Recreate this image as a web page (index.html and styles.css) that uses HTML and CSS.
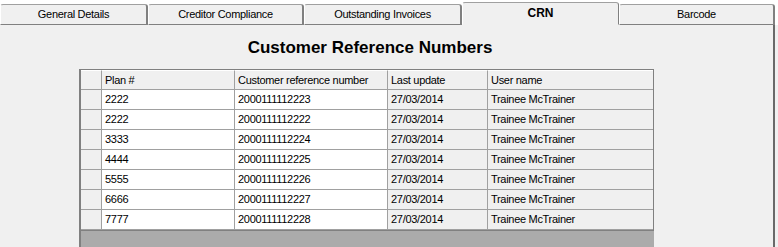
FILE: index.html
```html
<!DOCTYPE html>
<html lang="en">

<head>
  <meta charset="UTF-8" />
  <title>CRN</title>
  <link rel="stylesheet" href="styles.css">
</head>

<body>
  <div class="tabs">
    <div class="tab" style="width: 148px">General Details</div>
    <div class="tab" style="width: 156px">Creditor Compliance</div>
    <div class="tab" style="width: 158px">Outstanding Invoices</div>
    <div class="tab active" style="width: 157px">CRN</div>
    <div class="tab" style="width: 156px">Barcode</div>
  </div>

  <div class="panel">
    <h1>Customer Reference Numbers</h1>

    <div class="grid top">
      <div class="cell head row-head"></div>
      <div class="cell head">Plan #</div>
      <div class="cell head">Customer reference number</div>
      <div class="cell head">Last update</div>
      <div class="cell head">User name</div>
    </div>
    <div class="grid" id="rows"></div>
    <div class="empty"></div>
  </div>

  <script>
    const rows = [
      ["2222", "2000111112223"],
      ["2222", "2000111112222"],
      ["3333", "2000111112224"],
      ["4444", "2000111112225"],
      ["5555", "2000111112226"],
      ["6666", "2000111112227"],
      ["7777", "2000111112228"]
    ];

    const grid = document.getElementById("rows");
    rows.forEach(function (r) {
      grid.insertAdjacentHTML("beforeend",
        '<div class="cell row-head"></div>' +
        '<div class="cell edit">' + r[0] + '</div>' +
        '<div class="cell edit">' + r[1] + '</div>' +
        '<div class="cell">27/03/2014</div>' +
        '<div class="cell">Trainee McTrainer</div>');
    });
  </script>
</body>

</html>
```

FILE: styles.css
```css
* {
  box-sizing: border-box;
  margin: 0;
  padding: 0;
}

body {
  font-family: 'Liberation Sans', Arial, sans-serif;
  font-size: 11px;
  letter-spacing: -0.3px;
  color: #000;
  background: #f0f0f0;
  width: 778px;
  height: 247px;
  overflow: hidden;
}

.tabs {
  display: flex;
  align-items: flex-end;
  height: 25px;
  background: #fff;
}

.tab {
  height: 21px;
  line-height: 18px;
  text-align: center;
  background: #f0f0f0;
  border-top: 1px solid #a0a0a0;
  border-left: 1px solid #fff;
  border-right: 2px solid #808080;
  border-bottom: 1px solid #808080;
  border-radius: 3px 3px 0 0;
}

.tab.active {
  height: 23px;
  line-height: 20px;
  font-weight: bold;
  font-size: 12px;
  letter-spacing: 0;
  border-bottom: 1px solid #f0f0f0;
  border-right: 1px solid #808080;
}

.panel {
  width: 775px;
  height: 222px;
  overflow: hidden;
  border-right: 2px solid #696969;
  padding-top: 13px;
}

h1 {
  font-size: 17px;
  font-weight: bold;
  letter-spacing: 0;
  width: 740px;
  text-align: center;
  line-height: 19px;
  margin-bottom: 12px;
}

.grid {
  display: grid;
  grid-template-columns: 21px 133px 153px 100px 1fr;
  width: 575px;
  margin-left: 79px;
  border-left: 2px solid #808080;
  border-right: 1px solid #808080;
}

.grid.top {
  border-top: 1px solid #808080;
}

.cell {
  height: 20px;
  line-height: 19px;
  padding-left: 3px;
  white-space: nowrap;
  overflow: hidden;
  background: #f0f0f0;
  border-right: 1px solid #a0a0a0;
  border-bottom: 1px solid #a0a0a0;
}

.cell:nth-child(5n) {
  border-right: none;
}

.cell.edit {
  background: #fff;
}

.cell.head {
  border-top: 1px solid #fff;
}

.empty {
  width: 575px;
  height: 18px;
  margin-left: 79px;
  background: #ababab;
  border-top: 1px solid #808080;
  border-left: 2px solid #808080;
}
```
